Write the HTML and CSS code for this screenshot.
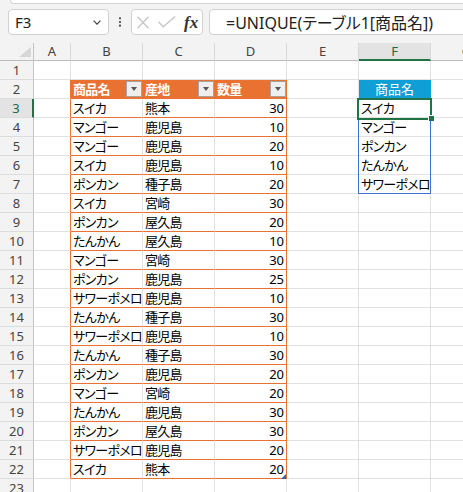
FILE: index.html
```html
<!DOCTYPE html>
<html lang="ja">
<head>
<meta charset="utf-8">
<title>UNIQUE</title>
<link rel="stylesheet" href="styles.css">
</head>
<body>
<div class="toolbar">
  <div class="ribbon-edge"></div>
  <div class="fbar">
    <div class="namebox"><span>F3</span><svg class="chev" width="8" height="5" viewBox="0 0 8 5"><polyline points="0.6,0.6 4,4.2 7.4,0.6" fill="none" stroke="#444" stroke-width="1.2"/></svg></div>
    <div class="more"><svg width="4" height="10" viewBox="0 0 4 10"><circle cx="2" cy="1.3" r="1.1" fill="#444"/><circle cx="2" cy="5" r="1.1" fill="#444"/><circle cx="2" cy="8.7" r="1.1" fill="#444"/></svg></div>
    <div class="btns">
      <svg width="12" height="13" viewBox="0 0 12 13"><path d="M0.5 0.8 L11.5 12.2 M11.5 0.8 L0.5 12.2" stroke="#c6c6c6" stroke-width="1.3" fill="none"/></svg>
      <svg width="18" height="12" viewBox="0 0 18 12"><polyline points="0.5,5.8 5.2,10.8 17.2,0.4" fill="none" stroke="#c6c6c6" stroke-width="1.3"/></svg>
      <span class="fx">fx</span>
    </div>
    <div class="formula">=UNIQUE(テーブル1[商品名])</div>
  </div>
</div>
<div class="sheet">
  <div class="row colhead"><div class="c corner"><span class="tri"></span></div><div class="c ch">A</div><div class="c ch">B</div><div class="c ch">C</div><div class="c ch">D</div><div class="c ch">E</div><div class="c ch selc">F</div><div class="c ch">G</div></div>
  <div class="row"><div class="c rh">1</div><div class="c"></div><div class="c"></div><div class="c"></div><div class="c"></div><div class="c"></div><div class="c"></div><div class="c"></div></div>
  <div class="row"><div class="c rh">2</div><div class="c le"></div><div class="c th"><span>商品名</span><span class="fb"></span></div><div class="c th"><span>産地</span><span class="fb"></span></div><div class="c th"><span>数量</span><span class="fb"></span></div><div class="c"></div><div class="c bh">商品名</div><div class="c"></div></div>
  <div class="row"><div class="c rh selr">3</div><div class="c le"></div><div class="c t">スイカ</div><div class="c t">熊本</div><div class="c t re num">30</div><div class="c"></div><div class="c">スイカ</div><div class="c"></div></div>
  <div class="row"><div class="c rh">4</div><div class="c le"></div><div class="c t">マンゴー</div><div class="c t">鹿児島</div><div class="c t re num">10</div><div class="c"></div><div class="c">マンゴー</div><div class="c"></div></div>
  <div class="row"><div class="c rh">5</div><div class="c le"></div><div class="c t">マンゴー</div><div class="c t">鹿児島</div><div class="c t re num">20</div><div class="c"></div><div class="c">ポンカン</div><div class="c"></div></div>
  <div class="row"><div class="c rh">6</div><div class="c le"></div><div class="c t">スイカ</div><div class="c t">鹿児島</div><div class="c t re num">10</div><div class="c"></div><div class="c">たんかん</div><div class="c"></div></div>
  <div class="row"><div class="c rh">7</div><div class="c le"></div><div class="c t">ポンカン</div><div class="c t">種子島</div><div class="c t re num">20</div><div class="c"></div><div class="c">サワーポメロ</div><div class="c"></div></div>
  <div class="row"><div class="c rh">8</div><div class="c le"></div><div class="c t">スイカ</div><div class="c t">宮崎</div><div class="c t re num">30</div><div class="c"></div><div class="c"></div><div class="c"></div></div>
  <div class="row"><div class="c rh">9</div><div class="c le"></div><div class="c t">ポンカン</div><div class="c t">屋久島</div><div class="c t re num">20</div><div class="c"></div><div class="c"></div><div class="c"></div></div>
  <div class="row"><div class="c rh">10</div><div class="c le"></div><div class="c t">たんかん</div><div class="c t">屋久島</div><div class="c t re num">10</div><div class="c"></div><div class="c"></div><div class="c"></div></div>
  <div class="row"><div class="c rh">11</div><div class="c le"></div><div class="c t">マンゴー</div><div class="c t">宮崎</div><div class="c t re num">30</div><div class="c"></div><div class="c"></div><div class="c"></div></div>
  <div class="row"><div class="c rh">12</div><div class="c le"></div><div class="c t">ポンカン</div><div class="c t">鹿児島</div><div class="c t re num">25</div><div class="c"></div><div class="c"></div><div class="c"></div></div>
  <div class="row"><div class="c rh">13</div><div class="c le"></div><div class="c t">サワーポメロ</div><div class="c t">鹿児島</div><div class="c t re num">10</div><div class="c"></div><div class="c"></div><div class="c"></div></div>
  <div class="row"><div class="c rh">14</div><div class="c le"></div><div class="c t">たんかん</div><div class="c t">種子島</div><div class="c t re num">30</div><div class="c"></div><div class="c"></div><div class="c"></div></div>
  <div class="row"><div class="c rh">15</div><div class="c le"></div><div class="c t">サワーポメロ</div><div class="c t">鹿児島</div><div class="c t re num">10</div><div class="c"></div><div class="c"></div><div class="c"></div></div>
  <div class="row"><div class="c rh">16</div><div class="c le"></div><div class="c t">たんかん</div><div class="c t">種子島</div><div class="c t re num">30</div><div class="c"></div><div class="c"></div><div class="c"></div></div>
  <div class="row"><div class="c rh">17</div><div class="c le"></div><div class="c t">ポンカン</div><div class="c t">鹿児島</div><div class="c t re num">20</div><div class="c"></div><div class="c"></div><div class="c"></div></div>
  <div class="row"><div class="c rh">18</div><div class="c le"></div><div class="c t">マンゴー</div><div class="c t">宮崎</div><div class="c t re num">20</div><div class="c"></div><div class="c"></div><div class="c"></div></div>
  <div class="row"><div class="c rh">19</div><div class="c le"></div><div class="c t">たんかん</div><div class="c t">鹿児島</div><div class="c t re num">30</div><div class="c"></div><div class="c"></div><div class="c"></div></div>
  <div class="row"><div class="c rh">20</div><div class="c le"></div><div class="c t">ポンカン</div><div class="c t">屋久島</div><div class="c t re num">30</div><div class="c"></div><div class="c"></div><div class="c"></div></div>
  <div class="row"><div class="c rh">21</div><div class="c le"></div><div class="c t">サワーポメロ</div><div class="c t">鹿児島</div><div class="c t re num">20</div><div class="c"></div><div class="c"></div><div class="c"></div></div>
  <div class="row"><div class="c rh">22</div><div class="c le"></div><div class="c t">スイカ</div><div class="c t">熊本</div><div class="c t re num">20</div><div class="c"></div><div class="c"></div><div class="c"></div></div>
  <div class="row"><div class="c rh">23</div><div class="c"></div><div class="c"></div><div class="c"></div><div class="c"></div><div class="c"></div><div class="c"></div><div class="c"></div></div>

  <div class="spill"></div>
  <div class="selbox"></div>
  <div class="handle"></div>
  <div class="resize"></div>
</div>
</body>
</html>
```
FILE: styles.css
```css
* { box-sizing: border-box; }
html, body { margin: 0; padding: 0; }
body {
  width: 463px;
  height: 492px;
  overflow: hidden;
  background: #f3f3f3;
  font-family: "Noto Sans", "Noto Sans CJK JP", sans-serif;
}

/* ---------- formula bar ---------- */
.toolbar { height: 43px; }
.ribbon-edge {
  height: 4px;
  margin-left: 10px;
  background: #fff;
  border-left: 1px solid #d4d4d4;
  border-bottom: 1px solid #d4d4d4;
  border-bottom-left-radius: 5px;
}
.fbar {
  display: flex;
  height: 26px;
  margin-top: 5px;
  padding-left: 8px;
  overflow: hidden;
}
.namebox {
  flex: none;
  width: 101px;
  background: #fff;
  border: 1px solid #d1d1d1;
  border-radius: 4px;
  display: flex;
  align-items: center;
  justify-content: space-between;
  padding: 0 7px 0 6px;
  font-size: 15px;
  color: #222;
}
.chev { margin-top: 1px; }
.more {
  flex: none;
  width: 22px;
  display: flex;
  align-items: center;
  justify-content: center;
}
.btns {
  flex: none;
  width: 72px;
  background: #fff;
  border: 1px solid #d1d1d1;
  border-radius: 4px;
  display: flex;
  align-items: center;
  gap: 9px;
  padding-left: 5px;
}
.btns svg { flex: none; }
.fx {
  font-family: "Liberation Serif", serif;
  font-style: italic;
  font-weight: bold;
  font-size: 17px;
  color: #333;
  margin-left: -1px;
  line-height: 1;
}
.formula {
  flex: 1 0 280px;
  margin-left: 6px;
  background: #fff;
  border: 1px solid #d1d1d1;
  border-radius: 4px;
  display: flex;
  align-items: center;
  padding-left: 16px;
  font-size: 16px;
  color: #222;
  white-space: nowrap;
  font-feature-settings: "palt";
}

/* ---------- grid ---------- */
.sheet { position: relative; }
.row {
  display: grid;
  grid-template-columns: 34px 37px 72px 72px 72px 72px 72px 72px;
  height: 19px;
}
.colhead { height: 18px; }
.c {
  background: #fff;
  border-right: 1px solid #e1e1e1;
  border-bottom: 1px solid #e1e1e1;
  padding: 1px 2px 0;
  font-family: "Noto Sans", "Noto Sans CJK JP", sans-serif;
  font-size: 13px;
  letter-spacing: -0.7px;
  line-height: 17px;
  color: #000;
  white-space: nowrap;
  overflow: hidden;
  font-feature-settings: "palt";
}
.corner {
  background: #f3f3f3;
  border-right-color: #c4c4c4;
  border-bottom-color: #bdbdbd;
  display: flex;
  justify-content: flex-end;
  align-items: flex-end;
  padding: 0 2px 3px 0;
}
.tri {
  width: 0;
  height: 0;
  border-left: 12px solid transparent;
  border-bottom: 10px solid #d6d6d6;
}
.ch {
  background: #f3f3f3;
  border-right-color: #d9d9d9;
  border-bottom-color: #bdbdbd;
  text-align: center;
  padding-top: 0;
  letter-spacing: 0;
  font-size: 13px;
  line-height: 17px;
  color: #444;
}
.rh {
  background: #f3f3f3;
  border-right-color: #c4c4c4;
  border-bottom-color: #dcdcdc;
  text-align: center;
  letter-spacing: 0;
  font-size: 13px;
  color: #444;
}
.selc {
  background: #e3e3e3;
  border-bottom: 2px solid #217346;
  color: #1d6a3e;
}
.selr {
  background: #e3e3e3;
  border-right: 2px solid #217346;
  color: #1d6a3e;
}

/* table */
.le { border-right-color: #e97132; }
.t { border-bottom-color: #e97132; }
.re { border-right-color: #e97132; }
.num { text-align: right; padding-right: 2px; letter-spacing: 0; }
.th {
  background: #e97132;
  color: #fff;
  font-weight: bold;
  padding-top: 0;
  border-right-color: #e97132;
  border-bottom-color: #e97132;
  display: flex;
  align-items: center;
  justify-content: space-between;
}
.fb {
  flex: none;
  width: 16px;
  height: 16px;
  margin-right: -2px;
  background: #efefef;
  border: 1px solid #a3a3a3;
  display: flex;
  align-items: center;
  justify-content: center;
}
.fb::after {
  content: "";
  width: 0;
  height: 0;
  border-left: 3.5px solid transparent;
  border-right: 3.5px solid transparent;
  border-top: 4px solid #555;
}
.bh {
  background: #0f9ed5;
  color: #fff;
  text-align: center;
  padding-top: 0;
  letter-spacing: 0;
  line-height: 18px;
  border-right-color: #0f9ed5;
}

/* overlays */
.spill {
  position: absolute;
  left: 358px;
  top: 56px;
  width: 73px;
  height: 95px;
  border: 1px solid #3a72d6;
}
.selbox {
  position: absolute;
  left: 357px;
  top: 55px;
  width: 75px;
  height: 22px;
  border: 2px solid #217346;
}
.handle {
  position: absolute;
  left: 428px;
  top: 72px;
  width: 6px;
  height: 6px;
  background: #217346;
  border: 1px solid #fff;
  border-right: 0;
  border-bottom: 0;
}
.resize {
  position: absolute;
  left: 281px;
  top: 431px;
  width: 0;
  height: 0;
  border-left: 5px solid transparent;
  border-bottom: 5px solid #3f5fa3;
}
```
